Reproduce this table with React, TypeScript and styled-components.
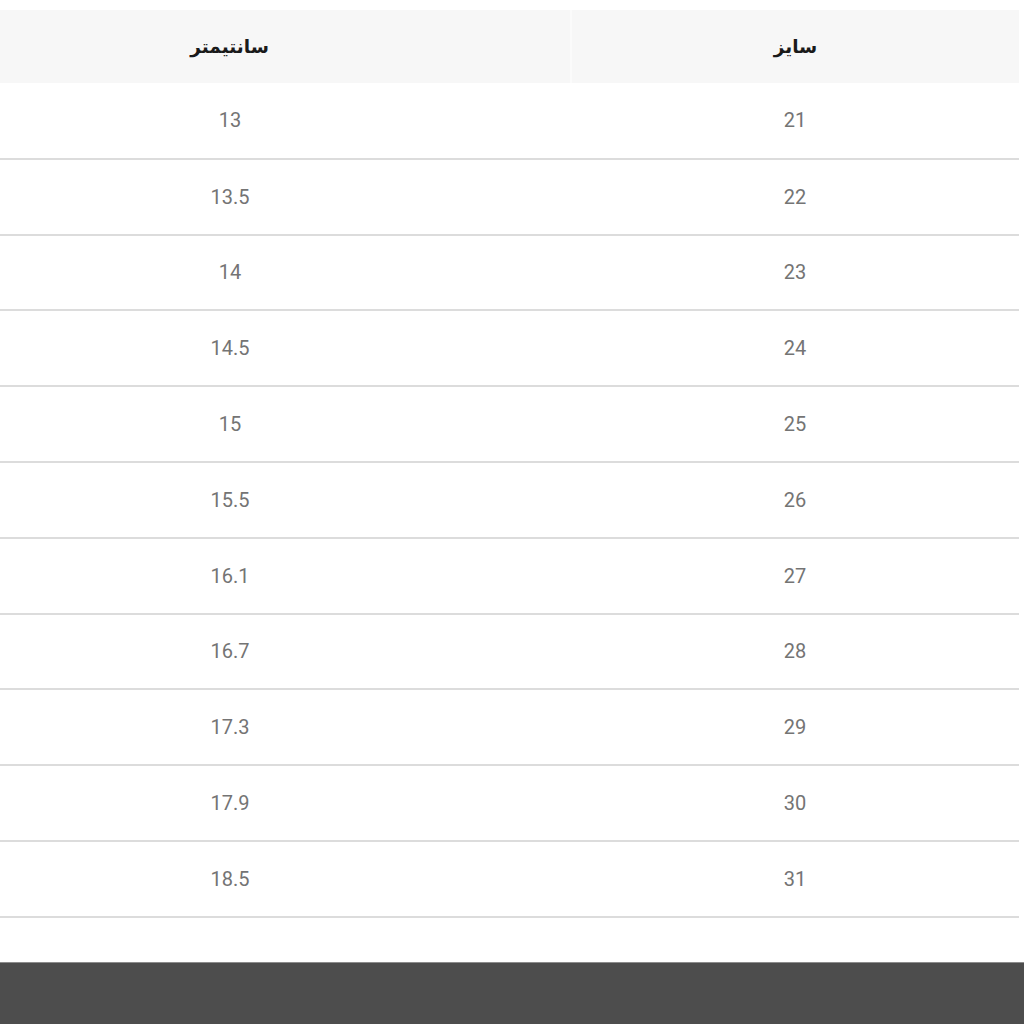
import React from 'react'
import styled, {createGlobalStyle} from 'styled-components'

const GlobalStyle = createGlobalStyle`
    html, body {
        margin: 0;
        padding: 0;
        background: #ffffff;
    }
    body {
        font-family: Roboto, "DejaVu Sans", "Noto Sans", sans-serif;
    }
`

const Page = styled.div`
    min-height: 1024px;
    display: flex;
    flex-direction: column;
    padding-top: 10px;
    box-sizing: border-box;
`

const Table = styled.table`
    width: 1019px;
    border-collapse: collapse;
    table-layout: fixed;
    margin-bottom: 44px;
`

const HeadCell = styled.th<{$side: 'right' | 'left'}>`
    height: 73px;
    padding: 0 ${(props) => (props.$side === 'left' ? '111px' : '0')} 0 0;
    background-color: #f7f7f7;
    font-family: "DejaVu Sans", sans-serif;
    font-weight: 700;
    font-size: 18.5px;
    color: #1a1a1a;
    text-align: center;
    vertical-align: middle;
    border-left: ${(props) => (props.$side === 'right' ? '2px solid #fbfbfb' : 'none')};
`

const Row = styled.tr`
    height: 75.8px;
    border-bottom: 2px solid #dcdcdc;
`

const Cell = styled.td<{$side: 'right' | 'left'}>`
    padding: 0 ${(props) => (props.$side === 'left' ? '111px' : '0')} 0 0;
    font-family: Roboto, sans-serif;
    font-size: 20px;
    color: #747474;
    text-align: center;
    vertical-align: middle;
`

const Footer = styled.footer`
    margin-top: auto;
    height: 61px;
    background-color: #4d4d4d;
    border-top: 1.5px solid #8c8c8c;
`

const sizes: [string, string][] = [
    ['21', '13'],
    ['22', '13.5'],
    ['23', '14'],
    ['24', '14.5'],
    ['25', '15'],
    ['26', '15.5'],
    ['27', '16.1'],
    ['28', '16.7'],
    ['29', '17.3'],
    ['30', '17.9'],
    ['31', '18.5'],
]

export default function App() {
    return (
        <>
            <GlobalStyle />
            <Page>
                <Table dir="rtl">
                    <colgroup>
                        <col style={{width: 448}} />
                        <col style={{width: 571}} />
                    </colgroup>
                    <thead>
                        <tr>
                            <HeadCell $side="right">سایز</HeadCell>
                            <HeadCell $side="left">سانتیمتر</HeadCell>
                        </tr>
                    </thead>
                    <tbody>
                        {sizes.map(([size, cm]) => (
                            <Row key={size}>
                                <Cell $side="right">{size}</Cell>
                                <Cell $side="left">{cm}</Cell>
                            </Row>
                        ))}
                    </tbody>
                </Table>
                <Footer />
            </Page>
        </>
    )
}
